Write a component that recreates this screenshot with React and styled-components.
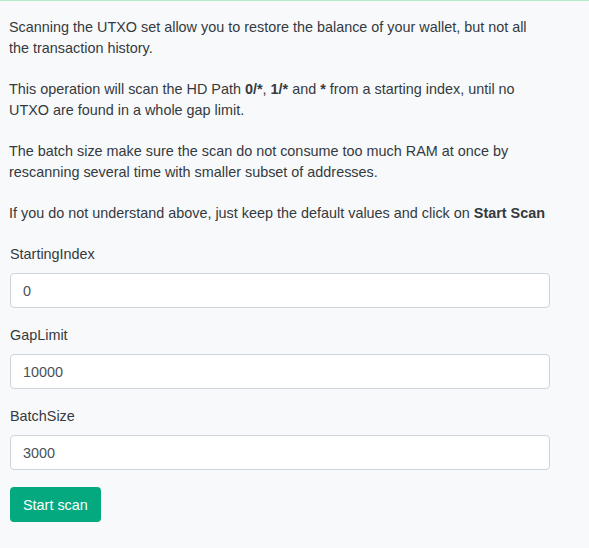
import styled, { createGlobalStyle } from 'styled-components'

const GlobalStyle = createGlobalStyle`
  html, body {
    margin: 0;
    padding: 0;
    background: #f8f9fa;
  }
  body {
    font-family: "Liberation Sans", Arial, sans-serif;
    font-size: 14.4px;
    color: #343a40;
  }
`

const Page = styled.div`
  border-top: 1px solid #b7ecc9;
  min-height: 547px;
  padding: 16px 39px 20px 10px;
  box-sizing: border-box;
`

const Para = styled.p`
  margin: 0 0 20px -1px;
  line-height: 21px;
`

const Field = styled.div`
  display: flex;
  flex-direction: column;
  gap: 8px;
  margin-bottom: 17px;
`

const Label = styled.label`
  line-height: 21px;
`

const Input = styled.input`
  box-sizing: border-box;
  height: 35px;
  width: 540px;
  padding: 0 12px;
  border: 1px solid #ced4da;
  border-radius: 4px;
  background: #fff;
  font-family: inherit;
  font-size: 14.4px;
  color: #495057;
`

const Button = styled.button`
  height: 35px;
  padding: 0 13px;
  border: none;
  border-radius: 4px;
  background: #04a97f;
  color: #fff;
  font-family: inherit;
  font-size: 14.4px;
`

const fields = [
  { name: 'StartingIndex', value: '0' },
  { name: 'GapLimit', value: '10000' },
  { name: 'BatchSize', value: '3000' }
]

export default function App () {
  return (
    <Page>
      <GlobalStyle />
      <Para>
        Scanning the UTXO set allow you to restore the balance of your wallet, but not all the transaction history.
      </Para>
      <Para>
        This operation will scan the HD Path <b>0/*</b>, <b>1/*</b> and <b>*</b> from a starting index, until no UTXO are found in a whole gap limit.
      </Para>
      <Para>
        The batch size make sure the scan do not consume too much RAM at once by rescanning several time with smaller subset of addresses.
      </Para>
      <Para>
        If you do not understand above, just keep the default values and click on <b>Start Scan</b>
      </Para>
      {fields.map(f => (
        <Field key={f.name}>
          <Label>{f.name}</Label>
          <Input defaultValue={f.value} />
        </Field>
      ))}
      <Button>Start scan</Button>
    </Page>
  )
}
